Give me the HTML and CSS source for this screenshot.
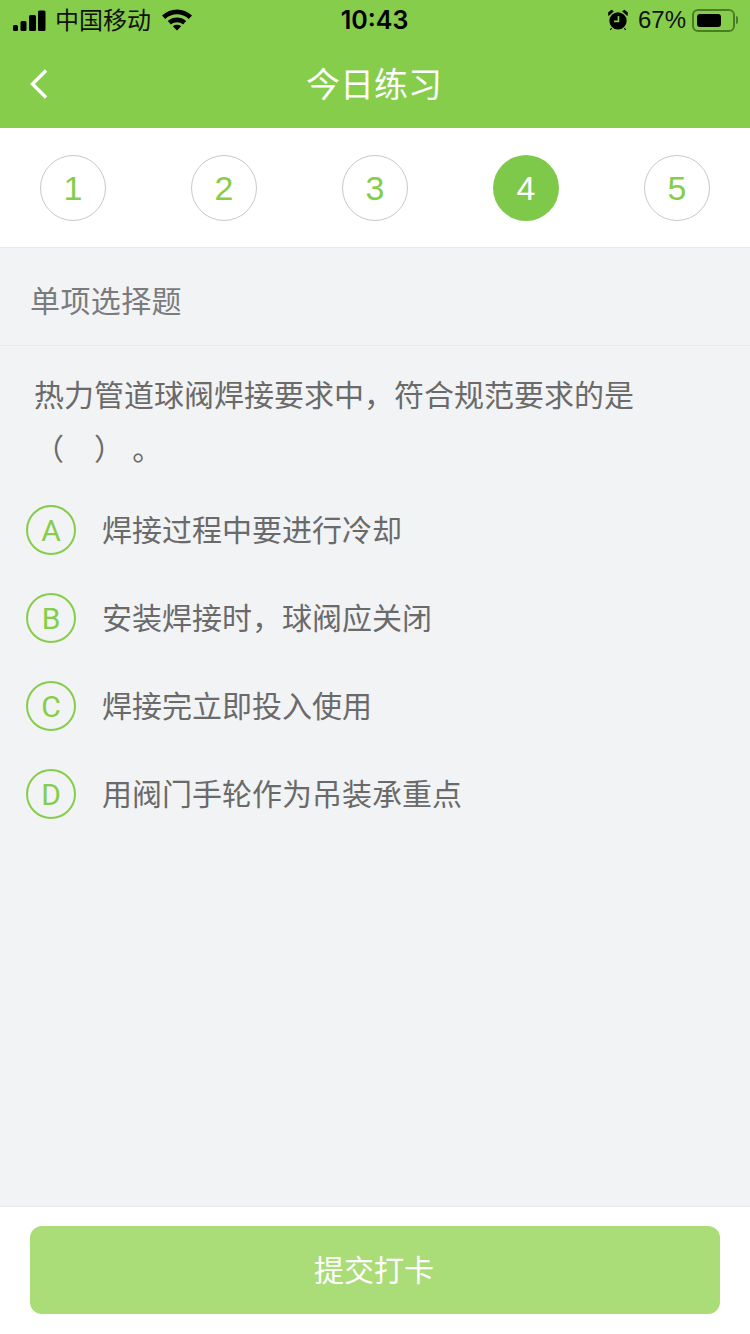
FILE: index.html
```html
<!DOCTYPE html>
<html>
  <head>
    <title>今日练习</title>
    <link rel="stylesheet" href="styles.css">
  </head>
  <body>
    <div class="page">
      <div class="top">
        <div class="status">
          <div class="status-left">
            <svg class="signal" width="33" height="24" viewBox="0 0 33 24">
              <rect x="0" y="16" width="5" height="6" rx="1.5"/>
              <rect x="7.5" y="12" width="6" height="10" rx="1.5"/>
              <rect x="16" y="6" width="7" height="16" rx="1.5"/>
              <rect x="25" y="1.5" width="7.5" height="20.5" rx="1.5"/>
            </svg>
            <span class="carrier">中国移动</span>
            <svg class="wifi" width="30" height="23" viewBox="0 0 30 23">
              <path d="M0 7.5C8.500 -.5 21.500 -.5 30 7.500L26.800 11C20 4.800 10 4.800 3.200 11Z"/>
              <path d="M5.800 13C11 8.400 19 8.400 24.200 13L21 16.500C17.400 13.400 12.600 13.400 9 16.500Z"/>
              <path d="M10.800 18.200C13.300 16.400 16.700 16.400 19.200 18.200L15 22.500Z"/>
            </svg>
          </div>
          <div class="time">10:43</div>
          <div class="status-right">
            <svg class="alarm" width="20" height="22" viewBox="0 0 22 24">
              <circle cx="11" cy="13" r="9.500"/>
              <path d="M1 6.500L5.500 2.500 3.800 1.500 0.800 4ZM21 6.500L16.500 2.500 18.200 1.500 21.200 4ZM4 21L2.500 23M18 21L19.500 23" stroke="#000" stroke-width="1.200"/>
              <path d="M11.500 7.500V13.500H6.500" fill="none" stroke="#86cd4b" stroke-width="1.800"/>
            </svg>
            <span class="percent">67%</span>
            <div class="battery">
              <div class="battery-fill"></div>
            </div>
            <div class="battery-tip"></div>
          </div>
        </div>
        <div class="nav">
          <svg class="back" width="20" height="32" viewBox="0 0 20 32">
            <path d="M17 2.500L3.500 16 17 29.500" fill="none" stroke="#fff" stroke-width="3.400"/>
          </svg>
          <h1 class="nav-title">今日练习</h1>
        </div>
      </div>

      <div class="steps">
        <div class="step">1</div>
        <div class="step">2</div>
        <div class="step">3</div>
        <div class="step step-active">4</div>
        <div class="step">5</div>
      </div>

      <div class="content">
        <div class="section-title">单项选择题</div>
        <div class="question">热力管道球阀焊接要求中，符合规范要求的是<br>（　）&nbsp;。</div>
        <div class="options">
          <div class="option"><span class="letter">A</span><span class="option-text">焊接过程中要进行冷却</span></div>
          <div class="option"><span class="letter">B</span><span class="option-text">安装焊接时，球阀应关闭</span></div>
          <div class="option"><span class="letter">C</span><span class="option-text">焊接完立即投入使用</span></div>
          <div class="option"><span class="letter">D</span><span class="option-text">用阀门手轮作为吊装承重点</span></div>
        </div>
      </div>

      <div class="footer">
        <button class="submit">提交打卡</button>
      </div>
    </div>
  </body>
</html>
```

FILE: styles.css
```css
* {
  box-sizing: border-box;
}
body {
  margin: 0;
  font-family: "Liberation Sans", "Noto Sans CJK SC", sans-serif;
}
.page {
  width: 750px;
  height: 1334px;
  display: flex;
  flex-direction: column;
  background-color: #f2f3f5;
  overflow: hidden;
}
.top {
  height: 128px;
  background-color: #86cd4b;
}
.status {
  height: 40px;
  display: flex;
  align-items: center;
  justify-content: space-between;
  padding: 0 12px 0 13px;
  color: #000;
}
.status svg {
  display: block;
}
.status-left {
  width: 260px;
  display: flex;
  align-items: center;
}
.signal {
  margin-right: 9px;
  margin-top: 1px;
}
.carrier {
  font-size: 24px;
  margin-bottom: 3px;
  color: #111;
}
.wifi {
  margin-left: 11px;
  margin-bottom: 1px;
}
.time {
  margin-right: 2px;
  font-size: 25px;
  font-weight: 600;
  font-family: Inter, "Liberation Sans", sans-serif;
}
.status-right {
  width: 260px;
  display: flex;
  align-items: center;
  justify-content: flex-end;
}
.percent {
  font-size: 24px;
  margin: 0 6px 0 10px;
  color: #111;
}
.battery {
  width: 43px;
  height: 23px;
  padding: 3px;
  border: 2px solid #4a7d24;
  border-radius: 6px;
}
.battery-fill {
  width: 24px;
  height: 100%;
  background-color: #000;
  border-radius: 3px;
}
.battery-tip {
  width: 2px;
  height: 8px;
  margin-left: 1px;
  background-color: #4a7d24;
  border-radius: 0 2px 2px 0;
}
.nav {
  height: 88px;
  position: relative;
  display: flex;
  align-items: center;
  justify-content: center;
}
.back {
  position: absolute;
  left: 29px;
  top: 28px;
}
.nav-title {
  margin: 0 2px 4px 0;
  font-size: 34px;
  font-weight: normal;
  color: #fff;
}
.steps {
  height: 120px;
  display: flex;
  align-items: center;
  justify-content: space-between;
  padding: 1px 40px 0;
  background-color: #fff;
  border-bottom: 1px solid #e8e9eb;
}
.step {
  width: 66px;
  height: 66px;
  display: flex;
  align-items: center;
  justify-content: center;
  border: 1px solid #c8c9cb;
  border-radius: 50%;
  font-size: 34px;
  color: #86cd4b;
}
.step-active {
  border: none;
  background-color: #7fc94a;
  color: #fff;
}
.content {
  flex: 1;
}
.section-title {
  height: 98px;
  padding: 4px 0 0 30px;
  display: flex;
  align-items: center;
  font-size: 30px;
  letter-spacing: 0.4px;
  color: #7a7b7d;
  border-bottom: 1px solid #e8e9eb;
}
.question {
  padding: 23px 30px 0 34px;
  font-size: 30px;
  line-height: 54px;
  color: #6a6a6a;
}
.options {
  padding: 9px 0 0 26px;
}
.option {
  height: 88px;
  display: flex;
  align-items: center;
  font-size: 30px;
  color: #6a6a6a;
}
.option-text {
  margin-bottom: 4px;
}
.letter {
  width: 50px;
  height: 50px;
  margin-right: 26px;
  padding-top: 1px;
  display: flex;
  align-items: center;
  justify-content: center;
  border: 2px solid #86cd4b;
  border-radius: 50%;
  font-family: Roboto, sans-serif;
  font-size: 30px;
  color: #86cd4b;
}
.footer {
  height: 128px;
  padding: 19px 30px 0;
  background-color: #fff;
  border-top: 1px solid #e8e9eb;
}
.submit {
  display: block;
  width: 100%;
  height: 88px;
  padding: 0 2px 5px 0;
  border: none;
  border-radius: 12px;
  background-color: #aadc78;
  color: #fff;
  font-size: 30px;
  font-family: inherit;
}
```
